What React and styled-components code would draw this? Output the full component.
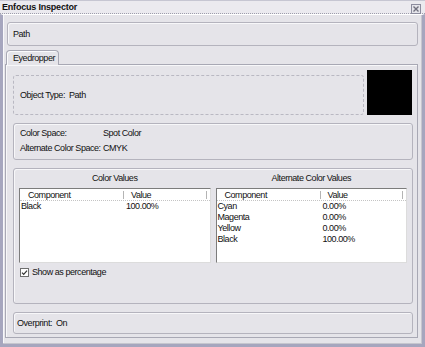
import React from 'react';
import styled, { createGlobalStyle } from 'styled-components';

const GlobalStyle = createGlobalStyle`
  html, body {
    margin: 0;
    padding: 0;
    background: #e5e4e9;
  }
  body {
    font-family: "Liberation Sans", Arial, sans-serif;
    font-size: 9px;
    letter-spacing: -0.45px;
    color: #111;
  }
`;

const Window = styled.div`
  width: 425px;
  height: 347px;
  display: flex;
  flex-direction: column;
  background: #e5e4e9;
  overflow: hidden;
`;

const TitleBar = styled.div`
  height: 14px;
  box-sizing: border-box;
  display: flex;
  justify-content: space-between;
  align-items: flex-start;
  padding-left: 2px;
  background: #ebeaef;
  border-top: 1px solid #c6c6d2;
  border-bottom: 1px dotted #9e9eac;
`;

const Title = styled.span`
  font-weight: bold;
  letter-spacing: -0.2px;
  line-height: 12px;
`;

const CloseButton = styled.div`
  width: 10px;
  height: 10px;
  margin-top: 3px;
  margin-right: 4px;
  display: flex;
`;

const Body = styled.div`
  flex: 1;
  box-sizing: border-box;
  border-top: 1px solid #fff;
  border-left: 3px solid #a6a6be;
  border-right: 3px solid #a6a6be;
  border-bottom: 3px solid #a6a6be;
  min-height: 0;
`;

const Inner = styled.div`
  height: 100%;
  box-sizing: border-box;
  display: flex;
  flex-direction: column;
  border-right: 1px solid #c6c6ce;
  border-bottom: 1px solid #c6c6ce;
  box-shadow: inset 1px 0 0 #f8f8fa;
`;

const PathBox = styled.div`
  height: 24px;
  box-sizing: border-box;
  margin: 7px 3px 0 4px;
  padding-left: 5px;
  display: flex;
  align-items: center;
  border: 1px solid #b4b3bd;
  border-radius: 3px;
  box-shadow: inset 1px 1px 0 #f7f7f9;
`;

const TabStrip = styled.div`
  display: flex;
  margin-top: 4px;
  padding-left: 3px;
  position: relative;
  z-index: 1;
`;

const Tab = styled.div`
  width: 53px;
  height: 15px;
  box-sizing: border-box;
  margin-bottom: -1px;
  padding-left: 6px;
  display: flex;
  align-items: center;
  background: #e5e4e9;
  border: 1px solid #a8a8b4;
  border-bottom: none;
  border-radius: 4px 4px 0 0;
  box-shadow: inset 1px 1px 0 #fafafc;
`;

const TabPage = styled.div`
  width: 413px;
  height: 274px;
  box-sizing: border-box;
  margin-left: 2px;
  padding: 5px 4px 3px 7px;
  display: flex;
  flex-direction: column;
  border: 1px solid #a8a8b4;
  box-shadow: inset 1px 1px 0 #f7f7f9;
`;

const ObjectRow = styled.div`
  height: 45px;
  display: flex;
  align-items: flex-end;
  gap: 3px;
`;

const ObjectBox = styled.div`
  flex: 1;
  height: 40px;
  box-sizing: border-box;
  padding-left: 6px;
  display: flex;
  align-items: center;
  border: 1px dashed #b9b8c2;
  border-radius: 3px;
`;

const Swatch = styled.div`
  width: 45px;
  height: 45px;
  margin-right: 1px;
  background: #000;
  align-self: flex-start;
`;

const Group = styled.div`
  box-sizing: border-box;
  height: ${p => p.$h}px;
  margin-top: 8px;
  border: 1px solid #b4b3bd;
  border-radius: 3px;
  box-shadow: inset 1px 1px 0 #f7f7f9;
`;

const InfoGroup = styled(Group)`
  padding: 2px 0 0 6px;
`;

const InfoRow = styled.div`
  display: flex;
  line-height: 15px;
  white-space: nowrap;
`;

const InfoLabel = styled.span`
  width: 83px;
  flex: none;
`;

const Label = styled.span`
  margin-right: 4px;
`;

const ValuesGroup = styled(Group)`
  padding: 3px 5px 0;
`;

const Columns = styled.div`
  display: grid;
  grid-template-columns: 1fr 1fr;
  gap: 5px;
`;

const Column = styled.div`
  display: flex;
  flex-direction: column;
`;

const ColumnTitle = styled.div`
  line-height: 12px;
  text-align: center;
  margin-bottom: 4px;
`;

const List = styled.div`
  height: 75px;
  box-sizing: border-box;
  background: #fff;
  border-top: 1px solid #7c7c7c;
  border-left: 1px solid #7c7c7c;
  border-right: 1px solid #dcdcdc;
  border-bottom: 1px solid #dcdcdc;
`;

const ListHeader = styled.div`
  height: 12px;
  box-sizing: border-box;
  display: flex;
  align-items: center;
  border-bottom: 1px dotted #c4c4c4;
`;

const HeaderCell = styled.div`
  box-sizing: border-box;
  height: 8px;
  line-height: 8px;
  width: ${p => (p.$grow ? 'auto' : '104px')};
  flex: ${p => (p.$grow ? 1 : 'none')};
  margin-right: ${p => (p.$grow ? '3px' : '0')};
  padding-left: ${p => p.$pad}px;
  border-right: 1px solid #b4b4b4;
`;

const Row = styled.div`
  display: flex;
  line-height: 11px;
`;

const Cell = styled.span`
  width: ${p => (p.$first ? '103px' : 'auto')};
  padding-left: ${p => (p.$first ? 1 : 2)}px;
`;

const CheckRow = styled.label`
  display: flex;
  align-items: center;
  gap: 3px;
  margin: 5px 0 0 1px;
  line-height: 9px;
`;

const Box = styled.span`
  width: 9px;
  height: 9px;
  display: flex;
`;

const OverprintGroup = styled(Group)`
  padding-left: 3px;
  display: flex;
  align-items: center;
`;

const ValueList = ({ rows }) => (
  <List>
    <ListHeader>
      <HeaderCell $pad={8}>Component</HeaderCell>
      <HeaderCell $pad={7} $grow>Value</HeaderCell>
    </ListHeader>
    {rows.map(([name, value]) => (
      <Row key={name}>
        <Cell $first>{name}</Cell>
        <Cell>{value}</Cell>
      </Row>
    ))}
  </List>
);

export default function App() {
  return (
    <>
      <GlobalStyle />
      <Window>
        <TitleBar>
          <Title>Enfocus Inspector</Title>
          <CloseButton>
            <svg width="10" height="10" viewBox="0 0 10 10">
              <rect x="0.5" y="0.5" width="9" height="9" fill="#e4e4ea" stroke="#8c8c9e" />
              <path d="M2.5 2.5 L7.5 7.5 M7.5 2.5 L2.5 7.5" stroke="#70707e" strokeWidth="1.4" />
            </svg>
          </CloseButton>
        </TitleBar>
        <Body>
          <Inner>
            <PathBox>Path</PathBox>
            <TabStrip>
              <Tab>Eyedropper</Tab>
            </TabStrip>
            <TabPage>
              <ObjectRow>
                <ObjectBox>
                  <Label>Object Type:</Label>
                  <span>Path</span>
                </ObjectBox>
                <Swatch />
              </ObjectRow>
              <InfoGroup $h={37}>
                <InfoRow>
                  <InfoLabel>Color Space:</InfoLabel>
                  <span>Spot Color</span>
                </InfoRow>
                <InfoRow>
                  <InfoLabel>Alternate Color Space:</InfoLabel>
                  <span>CMYK</span>
                </InfoRow>
              </InfoGroup>
              <ValuesGroup $h={136}>
                <Columns>
                  <Column>
                    <ColumnTitle>Color Values</ColumnTitle>
                    <ValueList rows={[['Black', '100.00%']]} />
                  </Column>
                  <Column>
                    <ColumnTitle>Alternate Color Values</ColumnTitle>
                    <ValueList
                      rows={[
                        ['Cyan', '0.00%'],
                        ['Magenta', '0.00%'],
                        ['Yellow', '0.00%'],
                        ['Black', '100.00%'],
                      ]}
                    />
                  </Column>
                </Columns>
                <CheckRow>
                  <Box>
                    <svg width="9" height="9" viewBox="0 0 9 9">
                      <rect x="0.5" y="0.5" width="8" height="8" fill="#fff" stroke="#6e6e6e" />
                      <path d="M2 4.6 L3.7 6.3 L7 2.6" fill="none" stroke="#333" strokeWidth="1.2" />
                    </svg>
                  </Box>
                  <span>Show as percentage</span>
                </CheckRow>
              </ValuesGroup>
              <OverprintGroup $h={22}>
                <Label>Overprint:</Label>
                <span>On</span>
              </OverprintGroup>
            </TabPage>
          </Inner>
        </Body>
      </Window>
    </>
  );
}
